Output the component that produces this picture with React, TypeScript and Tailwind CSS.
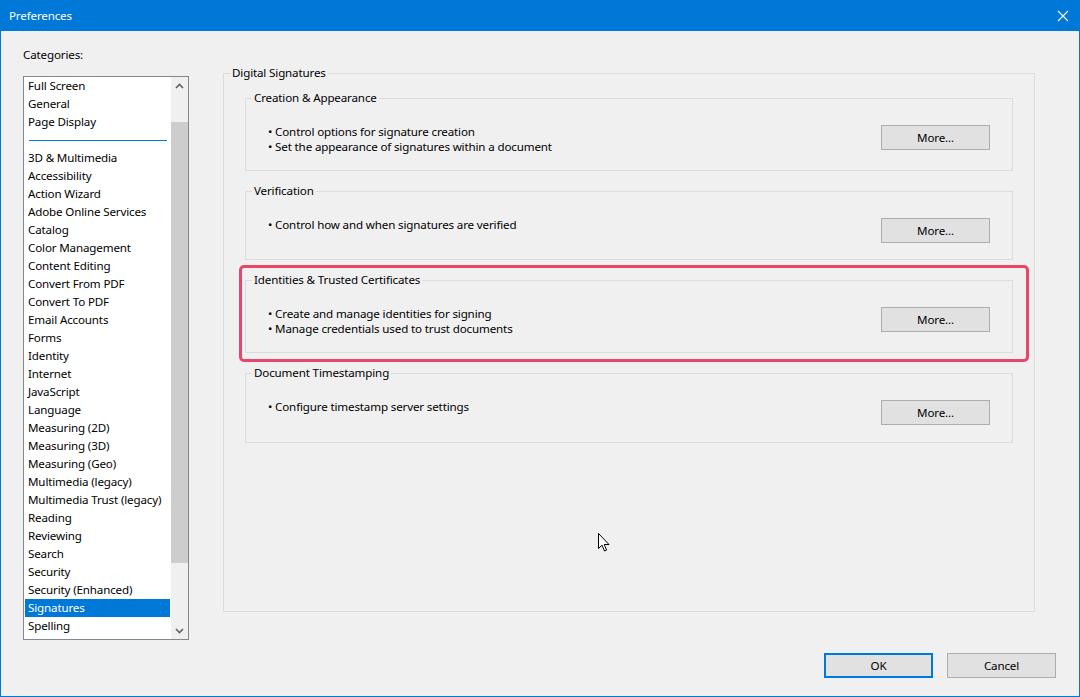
import React from "react";

const items: (string | null)[] = [
  "Full Screen",
  "General",
  "Page Display",
  null,
  "3D & Multimedia",
  "Accessibility",
  "Action Wizard",
  "Adobe Online Services",
  "Catalog",
  "Color Management",
  "Content Editing",
  "Convert From PDF",
  "Convert To PDF",
  "Email Accounts",
  "Forms",
  "Identity",
  "Internet",
  "JavaScript",
  "Language",
  "Measuring (2D)",
  "Measuring (3D)",
  "Measuring (Geo)",
  "Multimedia (legacy)",
  "Multimedia Trust (legacy)",
  "Reading",
  "Reviewing",
  "Search",
  "Security",
  "Security (Enhanced)",
  "Signatures",
  "Spelling",
];

const groups = [
  { title: "Creation & Appearance", lines: ["Control options for signature creation", "Set the appearance of signatures within a document"], h: "h-[81px]" },
  { title: "Verification", lines: ["Control how and when signatures are verified"], h: "h-[77px]" },
  { title: "Identities & Trusted Certificates", lines: ["Create and manage identities for signing", "Manage credentials used to trust documents"], h: "h-[81px]" },
  { title: "Document Timestamping", lines: ["Configure timestamp server settings"], h: "h-[78px]" },
];

const txt = "text-[11.6px] tracking-[-0.15px]";

function WinButton({ label, def }: { label: string; def?: boolean }) {
  return (
    <div
      className={
        "w-[109px] h-[25px] bg-[#e1e1e1] flex items-center justify-center leading-[16px] text-black " +
        txt +
        " " +
        (def ? "border-2 border-[#0078d7]" : "border border-[#adadad]")
      }
    >
      {label}
    </div>
  );
}

export default function App() {
  return (
    <div
      className="relative w-[1080px] h-[697px] bg-[#f0f0f0] border-x border-b border-[#0078d7] flex flex-col text-black overflow-hidden"
      style={{ fontFamily: '"Noto Sans", "Open Sans", sans-serif' }}
    >
      {/* Title bar */}
      <div className="h-[31px] -mx-px bg-[#0078d7] flex items-center justify-between pl-[9px] pr-[10px] shrink-0">
        <span className={"text-white leading-[16px] " + txt}>Preferences</span>
        <svg width="12" height="12" viewBox="0 0 12 12" className="mr-[1px]">
          <path d="M1 1 L11 11 M11 1 L1 11" stroke="white" strokeWidth="1.1" />
        </svg>
      </div>

      {/* Body */}
      <div className="flex-1 flex flex-row items-start">
        {/* Left column */}
        <div className="ml-[22px] pt-[16px] flex flex-col">
          <div className={"leading-[16px] h-[16px] " + txt}>Categories:</div>
          <div className="mt-[13px] w-[166px] h-[564px] border border-[#828790] bg-white flex flex-row">
            <div className="flex-1 flex flex-col overflow-hidden">
              {items.map((it, i) =>
                it === null ? (
                  <div key={i} className="h-[18px] shrink-0 flex items-center pl-[5px] pr-[4px]">
                    <div className="h-px w-full bg-[#0078d7]" />
                  </div>
                ) : (
                  <div
                    key={i}
                    className={
                      "h-[18px] shrink-0 mx-px pl-[3px] leading-[18px] whitespace-nowrap " +
                      txt +
                      " " +
                      (it === "Signatures" ? "bg-[#0078d7] text-white" : "")
                    }
                  >
                    {it}
                  </div>
                )
              )}
            </div>
            <div className="w-[17px] h-full bg-[#f0f0f0] flex flex-col">
              <div className="h-[17px] flex items-center justify-center shrink-0">
                <svg width="9" height="6" viewBox="0 0 9 6">
                  <path d="M1 5 L4.5 1.5 L8 5" stroke="#606060" strokeWidth="1.6" fill="none" />
                </svg>
              </div>
              <div className="mt-[28px] h-[441px] bg-[#cdcdcd]" />
              <div className="flex-1" />
              <div className="h-[17px] flex items-center justify-center shrink-0">
                <svg width="9" height="6" viewBox="0 0 9 6">
                  <path d="M1 1 L4.5 4.5 L8 1" stroke="#606060" strokeWidth="1.6" fill="none" />
                </svg>
              </div>
            </div>
          </div>
        </div>

        {/* Right group */}
        <fieldset className="ml-[34px] mt-[34px] w-[812px] h-[547px] border border-[#dcdcdc]">
          <legend className={"ml-[6px] px-[2px] leading-[16px] " + txt}>Digital Signatures</legend>
          <div className="flex flex-col gap-[12px] px-[21px] pt-[9px]">
            {groups.map((g) => (
              <fieldset key={g.title} className={"border border-[#dcdcdc] " + g.h}>
                <legend className={"ml-[6px] px-[2px] leading-[16px] " + txt}>{g.title}</legend>
                <div className="flex flex-row justify-between items-start px-[22px]">
                  <div className="mt-[18px] flex flex-col">
                    {g.lines.map((l) => (
                      <div key={l} className={"leading-[15px] whitespace-nowrap " + txt}>
                        • {l}
                      </div>
                    ))}
                  </div>
                  <div className="mt-[19px]">
                    <WinButton label="More..." />
                  </div>
                </div>
              </fieldset>
            ))}
          </div>
        </fieldset>
      </div>

      {/* Footer */}
      <div className="shrink-0 flex flex-row justify-end gap-[14px] pr-[23px] pb-[18px]">
        <WinButton label="OK" def />
        <WinButton label="Cancel" />
      </div>

      {/* Highlight overlay */}
      <div className="absolute left-[238px] top-[265px] w-[790px] h-[97px] border-[3px] border-[#e8456b] rounded-[5px] pointer-events-none" />

      {/* Cursor */}
      <svg className="absolute left-[597px] top-[533px]" width="12" height="20" viewBox="0 0 12 20">
        <path d="M0.5 0.5 L0.5 15.5 L4 12.2 L6.5 18 L8.6 17.1 L6.2 11.5 L11 11.5 Z" fill="white" stroke="black" strokeWidth="1" strokeLinejoin="miter" />
      </svg>
    </div>
  );
}
